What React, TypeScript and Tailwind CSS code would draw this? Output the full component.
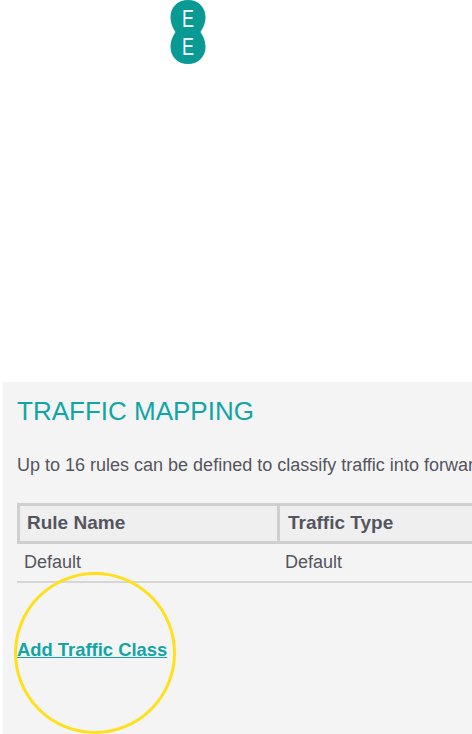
export default function App() {
  return (
    <div className="w-[472px] h-[734px] bg-white overflow-hidden flex flex-col font-['Liberation_Sans',Arial,sans-serif]">
      <div className="h-[382px] pl-[170px] shrink-0">
        <svg width="36" height="65" viewBox="0 0 36 65">
          <path d="M18 0C28.5 0 35.5 7.5 35.5 17C35.5 23.5 33 28 30.5 32C33 36 35.5 40.5 35.5 47C35.5 56.5 28.5 64 18 64C7.5 64 .5 56.5 .5 47C.5 40.5 3 36 5.5 32C3 28 .5 23.5 .5 17C.5 7.5 7.5 0 18 0Z" fill="#0a9a94" />
          <text x="0" y="27" transform="translate(18 0) scale(0.75 1)" textAnchor="middle" fontSize="24" fill="#fff" fontFamily="Liberation Sans">E</text>
          <text x="0" y="55" transform="translate(18 0) scale(0.75 1)" textAnchor="middle" fontSize="24" fill="#fff" fontFamily="Liberation Sans">E</text>
        </svg>
      </div>
      <div className="ml-[3px] flex-1 bg-[#f4f4f4] pl-[14px] overflow-hidden relative">
        <h1 className="mt-[15px] text-[26px] leading-[28px] font-normal text-[#13a5a5] whitespace-nowrap">TRAFFIC MAPPING</h1>
        <p className="mt-[29px] text-[18px] leading-[22px] text-[#555560] whitespace-nowrap">Up to 16 rules can be defined to classify traffic into forwarding classes.</p>
        <div className="mt-[27px] w-[600px]">
          <div className="flex border-[3px] border-[#cfcfcf] border-r-0 bg-[#efefef] h-[41px] text-[19px] font-bold text-[#555560]">
            <div className="w-[260px] pl-[7px] flex items-center border-r-[3px] border-[#cfcfcf] shrink-0">Rule Name</div>
            <div className="pl-[8px] flex items-center">Traffic Type</div>
          </div>
          <div className="flex h-[39px] border-b-2 border-[#d6d6d6] text-[18px] text-[#555560] items-center">
            <div className="w-[262px] pl-[7px] shrink-0">Default</div>
            <div className="pl-[6px]">Default</div>
          </div>
        </div>
        <a className="block mt-[57px] w-fit text-[18.4px] leading-[20px] font-bold text-[#13a5a5] underline">Add Traffic Class</a>
        <div className="absolute left-[11px] top-[190px] w-[162px] h-[162px] rounded-full border-[3px] border-[#ffe01a]" />
      </div>
    </div>
  );
}
